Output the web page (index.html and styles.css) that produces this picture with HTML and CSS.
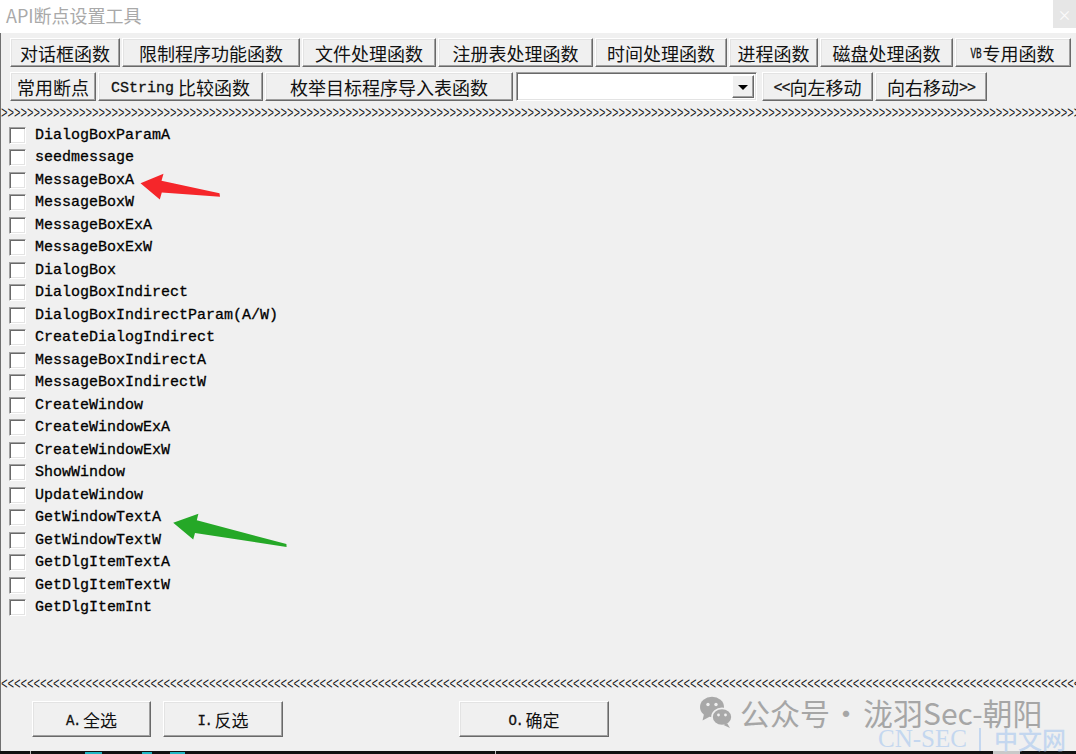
FILE: index.html
```html
<!DOCTYPE html>
<html lang="zh-CN">
<head>
    <meta charset="UTF-8">
    <meta name="viewport" content="width=device-width, initial-scale=1.0">
    <title>API断点设置工具</title>
    <link rel="stylesheet" href="styles.css">
</head>
<body>
    <div class="titlebar">
        <span class="title">API断点设置工具</span>
        <span class="close">×</span>
    </div>

    <div class="window">
        <!-- Function groups -->
        <div class="toolbar">
            <button class="btn b-dialog">对话框函数</button>
            <button class="btn b-limit">限制程序功能函数</button>
            <button class="btn b-file">文件处理函数</button>
            <button class="btn b-reg">注册表处理函数</button>
            <button class="btn b-time">时间处理函数</button>
            <button class="btn b-proc">进程函数</button>
            <button class="btn b-disk">磁盘处理函数</button>
            <button class="btn b-vb"><span class="mono narrow">VB</span>专用函数</button>
        </div>
        <div class="toolbar">
            <button class="btn b-common">常用断点</button>
            <button class="btn b-cstring"><span class="mono">CString</span>&nbsp;比较函数</button>
            <button class="btn b-import">枚举目标程序导入表函数</button>
            <div class="combo">
                <span class="combo-arrow"></span>
            </div>
            <button class="btn b-left"><span class="mono tight">&lt;&lt;</span>向左移动</button>
            <button class="btn b-right">向右移动<span class="mono tight">&gt;&gt;</span></button>
        </div>

        <div class="chevrons">&gt;&gt;&gt;&gt;&gt;&gt;&gt;&gt;&gt;&gt;&gt;&gt;&gt;&gt;&gt;&gt;&gt;&gt;&gt;&gt;&gt;&gt;&gt;&gt;&gt;&gt;&gt;&gt;&gt;&gt;&gt;&gt;&gt;&gt;&gt;&gt;&gt;&gt;&gt;&gt;&gt;&gt;&gt;&gt;&gt;&gt;&gt;&gt;&gt;&gt;&gt;&gt;&gt;&gt;&gt;&gt;&gt;&gt;&gt;&gt;&gt;&gt;&gt;&gt;&gt;&gt;&gt;&gt;&gt;&gt;&gt;&gt;&gt;&gt;&gt;&gt;&gt;&gt;&gt;&gt;&gt;&gt;&gt;&gt;&gt;&gt;&gt;&gt;&gt;&gt;&gt;&gt;&gt;&gt;&gt;&gt;&gt;&gt;&gt;&gt;&gt;&gt;&gt;&gt;&gt;&gt;&gt;&gt;&gt;&gt;&gt;&gt;&gt;&gt;&gt;&gt;&gt;&gt;&gt;&gt;&gt;&gt;&gt;&gt;&gt;&gt;&gt;&gt;&gt;&gt;&gt;&gt;&gt;&gt;&gt;&gt;&gt;&gt;&gt;&gt;&gt;&gt;&gt;&gt;&gt;&gt;&gt;&gt;&gt;&gt;&gt;&gt;&gt;&gt;&gt;&gt;&gt;&gt;&gt;&gt;&gt;&gt;&gt;&gt;&gt;&gt;&gt;&gt;&gt;&gt;&gt;&gt;&gt;&gt;&gt;&gt;&gt;&gt;&gt;&gt;&gt;&gt;&gt;&gt;&gt;</div>

        <ul class="api-list">
            <li><span class="check"></span>DialogBoxParamA</li>
            <li><span class="check"></span>seedmessage</li>
            <li><span class="check"></span>MessageBoxA</li>
            <li><span class="check"></span>MessageBoxW</li>
            <li><span class="check"></span>MessageBoxExA</li>
            <li><span class="check"></span>MessageBoxExW</li>
            <li><span class="check"></span>DialogBox</li>
            <li><span class="check"></span>DialogBoxIndirect</li>
            <li><span class="check"></span>DialogBoxIndirectParam(A/W)</li>
            <li><span class="check"></span>CreateDialogIndirect</li>
            <li><span class="check"></span>MessageBoxIndirectA</li>
            <li><span class="check"></span>MessageBoxIndirectW</li>
            <li><span class="check"></span>CreateWindow</li>
            <li><span class="check"></span>CreateWindowExA</li>
            <li><span class="check"></span>CreateWindowExW</li>
            <li><span class="check"></span>ShowWindow</li>
            <li><span class="check"></span>UpdateWindow</li>
            <li><span class="check"></span>GetWindowTextA</li>
            <li><span class="check"></span>GetWindowTextW</li>
            <li><span class="check"></span>GetDlgItemTextA</li>
            <li><span class="check"></span>GetDlgItemTextW</li>
            <li><span class="check"></span>GetDlgItemInt</li>
        </ul>

        <div class="chevrons bottom">&lt;&lt;&lt;&lt;&lt;&lt;&lt;&lt;&lt;&lt;&lt;&lt;&lt;&lt;&lt;&lt;&lt;&lt;&lt;&lt;&lt;&lt;&lt;&lt;&lt;&lt;&lt;&lt;&lt;&lt;&lt;&lt;&lt;&lt;&lt;&lt;&lt;&lt;&lt;&lt;&lt;&lt;&lt;&lt;&lt;&lt;&lt;&lt;&lt;&lt;&lt;&lt;&lt;&lt;&lt;&lt;&lt;&lt;&lt;&lt;&lt;&lt;&lt;&lt;&lt;&lt;&lt;&lt;&lt;&lt;&lt;&lt;&lt;&lt;&lt;&lt;&lt;&lt;&lt;&lt;&lt;&lt;&lt;&lt;&lt;&lt;&lt;&lt;&lt;&lt;&lt;&lt;&lt;&lt;&lt;&lt;&lt;&lt;&lt;&lt;&lt;&lt;&lt;&lt;&lt;&lt;&lt;&lt;&lt;&lt;&lt;&lt;&lt;&lt;&lt;&lt;&lt;&lt;&lt;&lt;&lt;&lt;&lt;&lt;&lt;&lt;&lt;&lt;&lt;&lt;&lt;&lt;&lt;&lt;&lt;&lt;&lt;&lt;&lt;&lt;&lt;&lt;&lt;&lt;&lt;&lt;&lt;&lt;&lt;&lt;&lt;&lt;&lt;&lt;&lt;&lt;&lt;&lt;&lt;&lt;&lt;&lt;&lt;&lt;&lt;&lt;&lt;&lt;&lt;&lt;&lt;&lt;&lt;&lt;&lt;&lt;&lt;&lt;</div>

        <div class="actions">
            <button class="btn a-all"><span class="mono key">A.</span>全选</button>
            <button class="btn a-invert"><span class="mono key">I.</span>反选</button>
            <button class="btn a-ok"><span class="mono key">O.</span>确定</button>
        </div>
    </div>

    <div class="taskbar">
        <span class="tick t1"></span>
        <span class="glint g1"></span>
        <span class="glint g2"></span>
        <span class="glint g3"></span>
        <span class="tick t2"></span>
        <span class="thumb"></span>
    </div>

    <!-- Annotation arrows -->
    <svg class="marks" width="1076" height="754" viewBox="0 0 1076 754">
        <polygon fill="#f5262a" points="140.5,183.3 163.5,173.8 161.5,180.8 219.5,193.2 220,196.8 161.8,192.6 159.8,199.4"/>
        <polygon fill="#25a827" points="173.2,522.7 198.4,513.8 196.8,520.3 286.4,544 286.6,547 195,533 193.2,539.6"/>
    </svg>

    <div class="watermark">
        <svg class="wechat" width="32" height="32" viewBox="0 0 32 32">
            <ellipse cx="12" cy="11" rx="12" ry="10.2" fill="#a8a8a8"/>
            <path d="M4 18 L2.5 24.5 L10 20.5 Z" fill="#a8a8a8"/>
            <circle cx="8" cy="8.5" r="1.7" fill="#f0f0f0"/>
            <circle cx="16" cy="8.5" r="1.7" fill="#f0f0f0"/>
            <ellipse cx="22" cy="21" rx="10" ry="8.6" fill="#a8a8a8" stroke="#f0f0f0" stroke-width="1.6"/>
            <path d="M27 27 L30 32 L23.5 29 Z" fill="#a8a8a8"/>
            <circle cx="18.5" cy="19" r="1.4" fill="#f0f0f0"/>
            <circle cx="25.5" cy="19" r="1.4" fill="#f0f0f0"/>
        </svg>
        <span class="wm-text">公众号<span class="dot">·</span>泷羽Sec-朝阳</span>
    </div>
    <div class="site-mark">CN-SEC<span class="bar"></span><span class="cn">中文网</span></div>
</body>
</html>
```

FILE: styles.css
```css
* {
    box-sizing: border-box;
}
body {
    margin: 0;
    width: 1076px;
    height: 754px;
    overflow: hidden;
    position: relative;
    background: #f0f0f0;
    font-family: "Noto Sans CJK SC", sans-serif;
    color: #111;
}

/* Title bar */
.titlebar {
    height: 33px;
    background: #fff;
    display: flex;
    justify-content: space-between;
    align-items: flex-start;
}
.title {
    padding-left: 6px;
    font-size: 18px;
    line-height: 30px;
    color: #a9a9a9;
}
.close {
    width: 23px;
    height: 28px;
    background: #e6e6e6;
    color: #fbfbfb;
    font-size: 14px;
    display: flex;
    align-items: center;
    justify-content: center;
}

/* Dialog body */
.window {
    height: 718px;
    border-left: 1px solid #707070;
    display: flex;
    flex-direction: column;
}
.toolbar {
    display: flex;
    gap: 2px;
    height: 29px;
    margin-top: 5px;
    padding-left: 9px;
}
.btn {
    height: 29px;
    padding: 0;
    background: #f0f0f0;
    border: 1px solid;
    border-color: #fff #696969 #696969 #fff;
    box-shadow: inset -1px -1px #a0a0a0, inset 1px 1px #e3e3e3;
    font-family: "Noto Sans CJK SC", sans-serif;
    font-size: 18px;
    line-height: 1;
    color: #111;
    display: flex;
    align-items: center;
    justify-content: center;
}
.btn .mono {
    font-family: "Liberation Mono", monospace;
    font-size: 15px;
    padding-top: 3px;
    -webkit-text-stroke: 0.3px #111;
}
.btn .mono.narrow {
    display: inline-block;
    transform: scaleX(0.62);
    margin: 0 -3px 0 -4px;
}
.btn .mono.tight {
    letter-spacing: -1px;
}
.btn .mono.key {
    font-size: 14px;
    letter-spacing: -1.5px;
    margin-right: 3px;
}
.b-dialog { width: 110px; }
.b-limit { width: 178px; }
.b-file { width: 134px; }
.b-reg { width: 155px; }
.b-time { width: 132px; }
.b-proc { width: 89px; }
.b-disk { width: 133px; }
.b-vb { width: 116px; }
.b-common { width: 86px; }
.b-cstring { width: 165px; }
.b-import { width: 248px; }
.b-left { width: 111px; margin-left: 3px; }
.b-right { width: 112px; }

.combo {
    width: 241px;
    height: 29px;
    margin-left: 1px;
    padding: 2px;
    background: #fff;
    border: 1px solid;
    border-color: #a0a0a0 #fff #fff #a0a0a0;
    box-shadow: inset 1px 1px #696969, inset -1px -1px #e3e3e3;
    display: flex;
    justify-content: flex-end;
}
.combo-arrow {
    width: 22px;
    background: #f0f0f0;
    border: 1px solid;
    border-color: #fff #696969 #696969 #fff;
    box-shadow: inset -1px -1px #a0a0a0;
    display: flex;
    align-items: center;
    justify-content: center;
}
.combo-arrow::after {
    content: "";
    border-left: 5px solid transparent;
    border-right: 5px solid transparent;
    border-top: 5px solid #000;
    margin-top: 1px;
}

/* ">>>>" / "<<<<" separator labels */
.chevrons {
    height: 18px;
    margin-top: 4px;
    font-family: "Liberation Mono", monospace;
    font-size: 11px;
    letter-spacing: -0.1px;
    line-height: 18px;
    color: #1a1a1a;
    white-space: nowrap;
    overflow: hidden;
    transform: scaleY(1.45);
}
.chevrons.bottom {
    margin-top: 0;
}

/* Breakpoint list */
.api-list {
    flex: 1;
    list-style: none;
    margin: 1px 0 0;
    padding: 0;
}
.api-list li {
    height: 22.5px;
    display: flex;
    align-items: center;
    font-family: "Liberation Mono", monospace;
    font-size: 15px;
    color: #000;
    -webkit-text-stroke: 0.3px #000;
}
.check {
    width: 17px;
    height: 17px;
    margin: 0 9px 0 8px;
    background: #fff;
    border: 1px solid;
    border-color: #a0a0a0 #fff #fff #a0a0a0;
    box-shadow: inset 1px 1px #696969, inset -1px -1px #e3e3e3;
}

.actions {
    display: flex;
    height: 36px;
    margin: 7px 0 14px;
}
.actions .btn {
    height: 36px;
    font-size: 17px;
}
.a-all { width: 119px; margin-left: 31px; }
.a-invert { width: 120px; margin-left: 12px; }
.a-ok { width: 150px; margin-left: 176px; }

/* Strip along the bottom edge */
.taskbar {
    height: 3px;
    background: #111;
    display: flex;
}
.tick {
    width: 1px;
    background: #bdbdbd;
}
.t1 { margin-left: 30px; }
.t2 { margin-left: 310px; }
.glint {
    height: 2px;
    align-self: flex-end;
    background: #1fb6c4;
}
.g1 { margin-left: 54px; width: 17px; }
.g2 { margin-left: 40px; width: 10px; }
.g3 { margin-left: 18px; width: 15px; }
.thumb {
    margin-left: 497px;
    width: 27px;
    background: #c9c9c9;
}

/* Overlays */
.marks {
    position: absolute;
    left: 0;
    top: 0;
    pointer-events: none;
}
.watermark {
    position: absolute;
    left: 700px;
    top: 696px;
    display: flex;
    align-items: center;
    gap: 8px;
}
.wm-text {
    font-size: 30px;
    line-height: 30px;
    color: #a6a6a6;
}
.wm-text .dot {
    margin: 0 2px 0 1px;
}
.site-mark {
    position: absolute;
    left: 878px;
    top: 728px;
    height: 22px;
    display: flex;
    align-items: center;
    font-family: "Liberation Serif", serif;
    font-size: 25px;
    line-height: 22px;
    color: #c4d7ef;
    white-space: nowrap;
}
.site-mark .bar {
    width: 2px;
    height: 23px;
    margin: 0 13px 0 12px;
    background: #c4d7ef;
}
.site-mark .cn {
    font-family: "Noto Sans CJK SC", sans-serif;
    font-size: 24px;
    font-weight: 500;
}
```
